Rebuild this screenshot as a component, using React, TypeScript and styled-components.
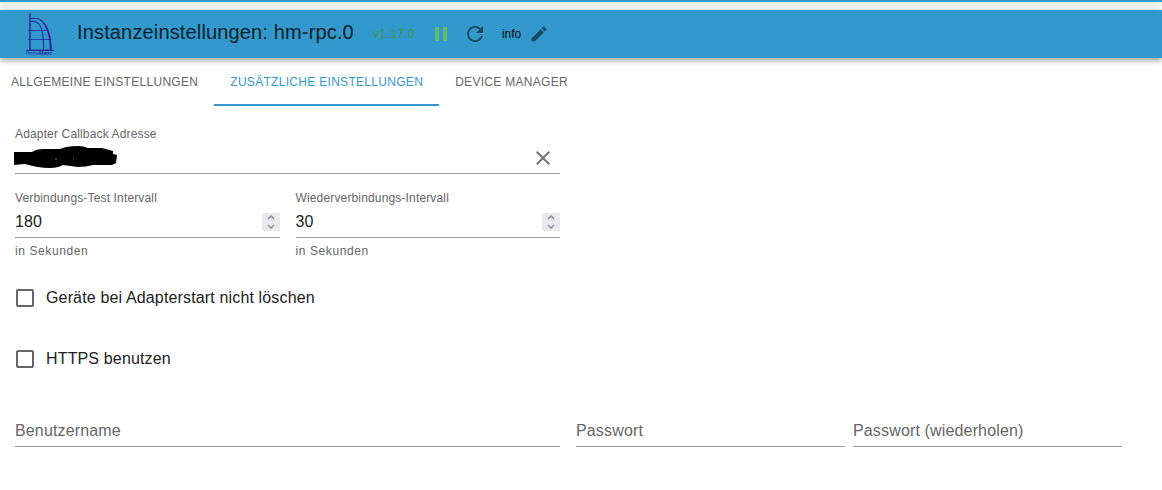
import React, { useState } from 'react';
import styled, { createGlobalStyle } from 'styled-components';
import { MdClose, MdEdit, MdPause, MdRefresh } from 'react-icons/md';

const GlobalStyle = createGlobalStyle`
  * { box-sizing: border-box; }
  body {
    margin: 0;
    background: #fff;
    color: #212121;
    font-family: "Liberation Sans", Arial, sans-serif;
    font-size: 16px;
  }
  button, input { font: inherit; color: inherit; letter-spacing: inherit; }
`;

const shadow = '0 2px 4px -1px rgba(0,0,0,.2), 0 4px 5px rgba(0,0,0,.14), 0 1px 10px rgba(0,0,0,.12)';

const TopStrip = styled.div`
  height: 2px;
  margin-bottom: 8px;
  background: #3399cc;
  box-shadow: ${shadow};
`;

const Toolbar = styled.header`
  display: flex;
  align-items: center;
  min-height: 48px;
  padding: 0 24px;
  background: #3399cc;
  box-shadow: ${shadow};
`;

const Title = styled.h1`
  margin: 0 19px 0 21px;
  padding-bottom: 4px;
  font-size: 20px;
  line-height: 24px;
  font-weight: 400;
  letter-spacing: 0.0075em;
  color: #0a1f29;
`;

const Version = styled.span`
  width: 56px;
  font-size: 12px;
  letter-spacing: 0.03em;
  color: #3c965a;
`;

const IconButton = styled.button<{ $color: string; $gap?: number }>`
  display: flex;
  flex: none;
  margin: 0 ${p => p.$gap ?? 0}px 0 0;
  padding: 0;
  border: 0;
  background: none;
  color: ${p => p.$color};
  cursor: pointer;
`;

const Info = styled.label`
  display: flex;
  align-items: center;
  gap: 8px;
  font-size: 12px;
  color: #020b12;
`;

const Tabs = styled.nav`
  display: flex;
  margin-left: -5px;
`;

const Tab = styled.button<{ $active: boolean }>`
  height: 48px;
  padding: 2px 16px 0;
  border: 0;
  border-bottom: 2px solid ${p => (p.$active ? '#3399cc' : 'transparent')};
  background: none;
  color: ${p => (p.$active ? '#3399cc' : '#666')};
  font-size: 12px;
  letter-spacing: 0.025em;
  text-transform: uppercase;
  white-space: nowrap;
  cursor: pointer;
`;

const Form = styled.form`
  padding: 20px 40px 32px 15px;
  letter-spacing: 0.00938em;
`;

const Columns = styled.div<{ $gap: number }>`
  display: grid;
  grid-template-columns: 1fr 1fr;
  column-gap: ${p => p.$gap}px;
`;

const Halves = styled.div`
  display: grid;
  grid-template-columns: 545fr 546fr;
  column-gap: 16px;
`;

const Stack = styled.div`
  display: grid;
  row-gap: 16px;
`;

const FieldBox = styled.div`
  min-width: 0;
`;

const FieldLabel = styled.label`
  display: block;
  font-size: 12px;
  line-height: 16px;
  color: #666;
`;

const InputLine = styled.div`
  position: relative;
  display: flex;
  align-items: center;
  height: 32px;
  border-bottom: 1px solid #949494;
`;

const Input = styled.input`
  flex: 1;
  min-width: 0;
  height: 31px;
  padding: 0;
  border: 0;
  outline: 0;
  background: none;
  appearance: textfield;
  &::placeholder { color: #666; opacity: 1; }
  &::-webkit-inner-spin-button { appearance: none; margin: 0; }
`;

const Helper = styled.p`
  margin: 5px 0 0;
  font-size: 12px;
  line-height: 16px;
  letter-spacing: 0.05em;
  color: #666;
`;

const Stepper = styled.div`
  display: grid;
  width: 18px;
  height: 18px;
  background: #e9e9ed;
`;

const StepButton = styled.button`
  display: grid;
  place-items: center;
  height: 9px;
  padding: 0;
  border: 0;
  background: none;
  color: #8f8f9d;
`;

const Redaction = styled.svg`
  position: absolute;
  left: -1px;
  top: 4px;
  width: 103px;
  height: 22px;
`;

const CheckRows = styled.div`
  display: grid;
  row-gap: 37px;
  margin: 27px 0 44px;
`;

const CheckLabel = styled.label`
  display: flex;
  align-items: center;
  gap: 12px;
  height: 24px;
  padding-left: 1px;
  justify-self: start;
`;

const Checkbox = styled.input`
  appearance: none;
  width: 18px;
  height: 18px;
  margin: 0;
  border: 2px solid #666;
  border-radius: 2px;
  &:checked { background: #3399cc; border-color: #3399cc; }
`;

const Logo = () => (
  <svg width="32" height="44" viewBox="0 0 32 44" role="img" aria-label="HomeMatic" fill="none" stroke="#2a2a9c">
    <path d="M6 1.300V38" strokeWidth="1.500" />
    <path d="M5 6.500H12C21 7 26 17 27 38" strokeWidth="1" />
    <path d="M16 8C23 12 27.500 22 27.500 38H26C26 24 23 14 16 8Z" fill="#2a2a9c" strokeWidth="0.500" />
    <path d="M5 9.500H10C17 10 20 19 19.500 38" strokeWidth="1.100" />
    <path d="M4 18.500H24M4 27.500H27" strokeWidth="0.800" />
    <path d="M1 39Q3 37.500 6 37.500H27Q29 37.500 31 39Z" fill="#2a2a9c" stroke="none" />
    <text x="2" y="43" fontSize="5" stroke="none" fill="#2a2a9c" fontFamily="Liberation Sans">
      Home<tspan fontWeight="700">Matic</tspan>
    </text>
  </svg>
);

const Chevron = ({ up }: { up?: boolean }) => (
  <svg width="8" height="5" viewBox="0 0 8 5" fill="none" stroke="currentColor" strokeWidth="1.5">
    <path d={up ? 'M1 4L4 1L7 4' : 'M1 1L4 4L7 1'} />
  </svg>
);

const NumberField = ({ id, label, initial }: { id: string; label: string; initial: number }) => {
  const [value, setValue] = useState(initial);
  return (
    <FieldBox>
      <FieldLabel htmlFor={id}>{label}</FieldLabel>
      <InputLine>
        <Input id={id} type="number" value={value} onChange={e => setValue(Number(e.target.value))} />
        <Stepper>
          <StepButton type="button" aria-label={`${label} erhöhen`} onClick={() => setValue(value + 1)}><Chevron up /></StepButton>
          <StepButton type="button" aria-label={`${label} verringern`} onClick={() => setValue(value - 1)}><Chevron /></StepButton>
        </Stepper>
      </InputLine>
      <Helper>in Sekunden</Helper>
    </FieldBox>
  );
};

const PlainField = ({ label, type = 'text' }: { label: string; type?: string }) => (
  <FieldBox>
    <InputLine>
      <Input type={type} aria-label={label} placeholder={label} />
    </InputLine>
  </FieldBox>
);

const tabs = ['Allgemeine Einstellungen', 'Zusätzliche Einstellungen', 'Device Manager'];

export default function App() {
  const [tab, setTab] = useState(1);
  return (
    <>
      <GlobalStyle />
      <TopStrip />
      <Toolbar>
        <Logo />
        <Title>Instanzeinstellungen: hm-rpc.0</Title>
        <Version>v1.17.0</Version>
        <IconButton $color="#66bb6a" $gap={10} aria-label="Pause"><MdPause size={24} /></IconButton>
        <IconButton $color="#174a64" $gap={15} aria-label="Neu starten"><MdRefresh size={24} /></IconButton>
        <Info>
          info
          <IconButton $color="#174a64" aria-label="Bearbeiten"><MdEdit size={20} /></IconButton>
        </Info>
      </Toolbar>
      <Tabs>
        {tabs.map((name, i) => (
          <Tab key={name} $active={i === tab} onClick={() => setTab(i)}>{name}</Tab>
        ))}
      </Tabs>
      <Form>
        <Halves>
          <Stack>
            <FieldBox>
              <FieldLabel htmlFor="callback">Adapter Callback Adresse</FieldLabel>
              <InputLine>
                <Input id="callback" />
                <Redaction viewBox="0 0 103 22" aria-hidden="true">
                  <path
                    fill="#000"
                    d="M0 6L18 6Q22 3 30 3L46 3Q52 0 64 0Q70 0 74 2H88L99 5V8L103 9L102 17L98 19H79Q72 21 64 21L49 19Q44 22 36 22Q24 22 11 18L0 19Z"
                  />
                  <path d="M41 13H43M59 13H60" stroke="#777" strokeWidth="1" />
                </Redaction>
                <IconButton type="button" $color="#757575" $gap={5} aria-label="Löschen"><MdClose size={24} /></IconButton>
              </InputLine>
            </FieldBox>
            <Columns $gap={16}>
              <NumberField id="test" label="Verbindungs-Test Intervall" initial={180} />
              <NumberField id="reconnect" label="Wiederverbindungs-Intervall" initial={30} />
            </Columns>
          </Stack>
        </Halves>
        <CheckRows>
          <CheckLabel><Checkbox type="checkbox" />Geräte bei Adapterstart nicht löschen</CheckLabel>
          <CheckLabel><Checkbox type="checkbox" />HTTPS benutzen</CheckLabel>
        </CheckRows>
        <Halves>
          <PlainField label="Benutzername" />
          <Columns $gap={8}>
            <PlainField label="Passwort" type="password" />
            <PlainField label="Passwort (wiederholen)" type="password" />
          </Columns>
        </Halves>
      </Form>
    </>
  );
}
